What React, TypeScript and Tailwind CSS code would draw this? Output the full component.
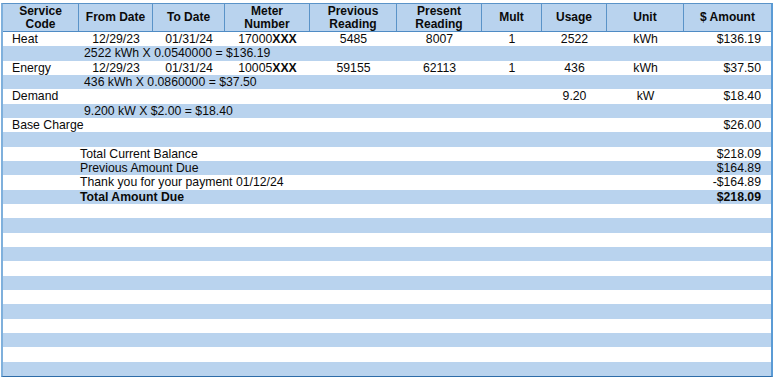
import React from "react";

const cols = "grid-cols-[76px_74px_72px_85px_87px_85px_60px_65px_77px_87px]";

type Row =
  | { kind: "line"; code?: string; from?: string; to?: string; meter?: string; meterX?: string; prev?: string; pres?: string; mult?: string; usage?: string; unit?: string; amount?: string }
  | { kind: "calc"; text: string }
  | { kind: "sum"; text: string; amount: string; bold?: boolean }
  | { kind: "empty" };

const rows: Row[] = [
  { kind: "line", code: "Heat", from: "12/29/23", to: "01/31/24", meter: "17000", meterX: "XXX", prev: "5485", pres: "8007", mult: "1", usage: "2522", unit: "kWh", amount: "$136.19" },
  { kind: "calc", text: "2522 kWh X 0.0540000 = $136.19" },
  { kind: "line", code: "Energy", from: "12/29/23", to: "01/31/24", meter: "10005", meterX: "XXX", prev: "59155", pres: "62113", mult: "1", usage: "436", unit: "kWh", amount: "$37.50" },
  { kind: "calc", text: "436 kWh X 0.0860000 = $37.50" },
  { kind: "line", code: "Demand", usage: "9.20", unit: "kW", amount: "$18.40" },
  { kind: "calc", text: "9.200 kW X $2.00 = $18.40" },
  { kind: "line", code: "Base Charge", amount: "$26.00" },
  { kind: "empty" },
  { kind: "sum", text: "Total Current Balance", amount: "$218.09" },
  { kind: "sum", text: "Previous Amount Due", amount: "$164.89" },
  { kind: "sum", text: "Thank you for your payment 01/12/24", amount: "-$164.89" },
  { kind: "sum", text: "Total Amount Due", amount: "$218.09", bold: true },
];
while (rows.length < 24) rows.push({ kind: "empty" });

const headers = [
  ["Service", "Code"],
  ["From Date"],
  ["To Date"],
  ["Meter", "Number"],
  ["Previous", "Reading"],
  ["Present", "Reading"],
  ["Mult"],
  ["Usage"],
  ["Unit"],
  ["$ Amount"],
];

function BodyRow({ row, i }: { row: Row; i: number }) {
  const bg = i % 2 === 0 ? "bg-white" : "bg-[#b9d3ee]";
  const base = `grid ${cols} flex-1 items-center ${bg} leading-none whitespace-nowrap`;
  if (row.kind === "line") {
    return (
      <div className={base}>
        <div className="pl-[9px]">{row.code}</div>
        <div className="text-center">{row.from}</div>
        <div className="text-center">{row.to}</div>
        <div className="text-center">
          {row.meter}
          {row.meterX && <span className="font-bold">{row.meterX}</span>}
        </div>
        <div className="text-center">{row.prev}</div>
        <div className="text-center">{row.pres}</div>
        <div className="text-center">{row.mult}</div>
        <div className="text-center">{row.usage}</div>
        <div className="text-center">{row.unit}</div>
        <div className="text-right pr-[10px]">{row.amount}</div>
      </div>
    );
  }
  if (row.kind === "calc") {
    return (
      <div className={base}>
        <div />
        <div className="col-span-8 pl-[5px]">{row.text}</div>
        <div />
      </div>
    );
  }
  if (row.kind === "sum") {
    return (
      <div className={`${base} ${row.bold ? "font-bold" : ""}`}>
        <div />
        <div className="col-span-8 pl-[1px]">{row.text}</div>
        <div className="text-right pr-[10px]">{row.amount}</div>
      </div>
    );
  }
  return <div className={base} />;
}

export default function App() {
  return (
    <div className="w-[774px] h-[380px] bg-white pt-[3px] pl-[1px]" style={{ fontFamily: '"Liberation Sans", Arial, sans-serif' }}>
      <div className="w-[772px] border-t border-t-[#5a93c8] border-l-2 border-l-[#7fb0dc] border-r-2 border-r-[#5b9bd5] border-b border-b-[#2e6ca8] text-[12.25px] text-[#0a0a0a]">
        <div className={`grid ${cols} h-[28px] bg-[#b9d3ee] border-b border-b-[#4f8bc4]`}>
          {headers.map((h, i) => (
            <div
              key={i}
              className={`flex flex-col items-center justify-center font-bold text-[12px] leading-[13px] ${i < headers.length - 1 ? "border-r border-r-[#5a93c8]" : ""}`}
            >
              {h.map((t, j) => (
                <div key={j}>{t}</div>
              ))}
            </div>
          ))}
        </div>
        <div className="flex flex-col h-[344px]">
          {rows.map((r, i) => (
            <BodyRow key={i} row={r} i={i} />
          ))}
        </div>
      </div>
    </div>
  );
}
